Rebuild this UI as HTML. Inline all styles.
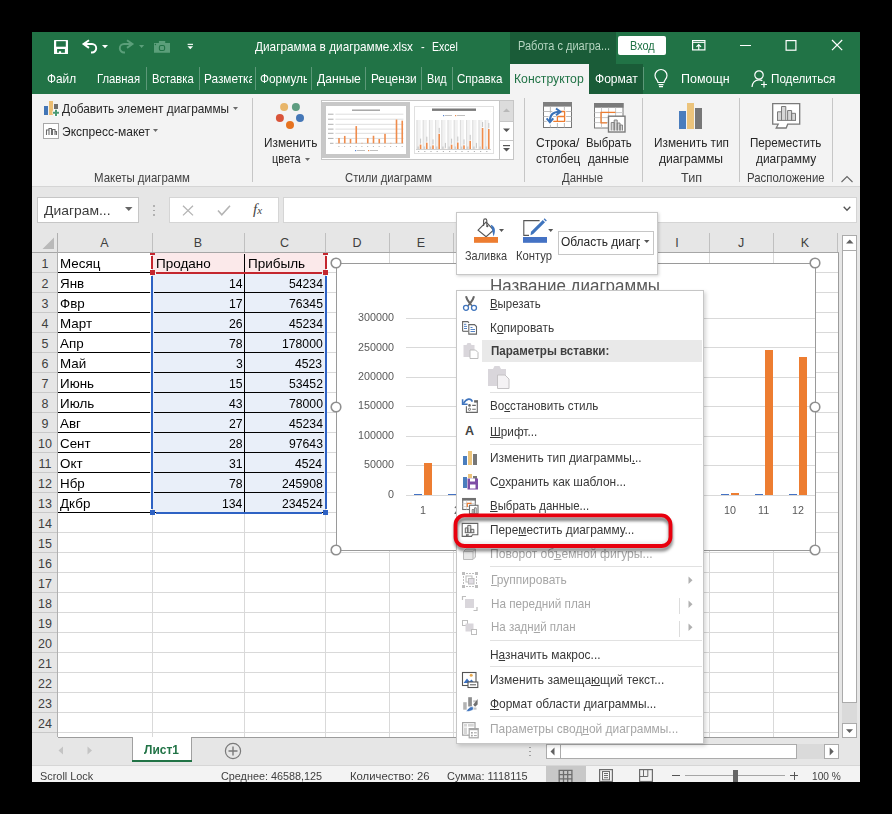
<!DOCTYPE html>
<html><head><meta charset="utf-8"><style>
html,body{margin:0;padding:0;background:#000;width:892px;height:814px;overflow:hidden}
body>div,body>span,body>svg{position:absolute}
div{position:absolute}
svg{position:absolute;overflow:visible}
.t{position:absolute;white-space:pre;font-family:"Liberation Sans",sans-serif;transform-origin:0 0}
u{text-decoration-thickness:1px;text-underline-offset:1px}
</style></head><body>
<div style="left:32px;top:32px;width:828px;height:62px;background:#217346;"></div>
<div style="left:510px;top:32px;width:106px;height:32px;background:#1a5c38;"></div>
<div style="left:510px;top:64px;width:133px;height:30px;background:#1a5c38;"></div>
<div style="left:510px;top:64px;width:79px;height:30px;background:#f3f3f3;"></div>
<div style="left:32px;top:94px;width:828px;height:92px;background:#f3f3f3;"></div>
<div style="left:32px;top:186px;width:828px;height:1px;background:#d5d5d5;"></div>
<div style="left:32px;top:187px;width:828px;height:578px;background:#e6e6e6;"></div>
<div style="left:32px;top:765px;width:828px;height:17px;background:#f3f3f3;"></div>
<span class="t" style="left:255.00px;top:40.00px;font-size:13px;line-height:13px;color:#ffffff;transform:scaleX(0.9073);">Диаграмма в диаграмме.xlsx</span>
<span class="t" style="left:420.60px;top:40.00px;font-size:13px;line-height:13px;color:#ffffff;transform:scaleX(0.8496);">-</span>
<span class="t" style="left:431.80px;top:40.00px;font-size:13px;line-height:13px;color:#ffffff;transform:scaleX(0.8117);">Excel</span>
<span class="t" style="left:517.60px;top:40.22px;font-size:12.5px;line-height:12.5px;color:#b5d5c0;transform:scaleX(0.8808);">Работа с диагра...</span>
<div style="left:618px;top:36px;width:48px;height:19px;background:#fff;border-radius:2px"></div>
<span class="t" style="left:630.00px;top:38.70px;font-size:13px;line-height:13px;color:#217346;transform:scaleX(0.8373);">Вход</span>
<span class="t" style="left:46.70px;top:71.90px;font-size:13px;line-height:13px;color:#ffffff;transform:scaleX(0.9099);">Файл</span>
<span class="t" style="left:97.30px;top:71.90px;font-size:13px;line-height:13px;color:#ffffff;transform:scaleX(0.8693);">Главная</span>
<span class="t" style="left:152.20px;top:71.90px;font-size:13px;line-height:13px;color:#ffffff;transform:scaleX(0.8623);">Вставка</span>
<div style="left:204px;top:64px;width:48px;height:29px;overflow:hidden"><div style="position:absolute;left:-204px;top:-64px"><span class="t" style="left:204.00px;top:71.90px;font-size:13px;line-height:13px;color:#ffffff;transform:scaleX(0.9099);">Разметка страницы</span></div></div>
<div style="left:260px;top:64px;width:47px;height:29px;overflow:hidden"><div style="position:absolute;left:-260px;top:-64px"><span class="t" style="left:260.00px;top:71.90px;font-size:13px;line-height:13px;color:#ffffff;transform:scaleX(0.9099);">Формулы</span></div></div>
<span class="t" style="left:316.60px;top:71.90px;font-size:13px;line-height:13px;color:#ffffff;transform:scaleX(0.9341);">Данные</span>
<div style="left:370px;top:64px;width:47px;height:29px;overflow:hidden"><div style="position:absolute;left:-370px;top:-64px"><span class="t" style="left:370.50px;top:71.90px;font-size:13px;line-height:13px;color:#ffffff;transform:scaleX(0.9099);">Рецензирование</span></div></div>
<span class="t" style="left:427.00px;top:71.90px;font-size:13px;line-height:13px;color:#ffffff;transform:scaleX(0.8372);">Вид</span>
<span class="t" style="left:457.30px;top:71.90px;font-size:13px;line-height:13px;color:#ffffff;transform:scaleX(0.8898);">Справка</span>
<span class="t" style="left:514.30px;top:71.60px;font-size:13px;line-height:13px;color:#217346;transform:scaleX(0.9406);">Конструктор</span>
<span class="t" style="left:595.00px;top:71.60px;font-size:13px;line-height:13px;color:#ffffff;transform:scaleX(0.9274);">Формат</span>
<span class="t" style="left:681.40px;top:71.90px;font-size:13px;line-height:13px;color:#ffffff;transform:scaleX(0.9598);">Помощн</span>
<span class="t" style="left:771.00px;top:71.90px;font-size:13px;line-height:13px;color:#ffffff;transform:scaleX(0.8974);">Поделиться</span>
<div style="left:146px;top:67px;width:1px;height:23px;background:#5c9878;"></div>
<div style="left:199px;top:67px;width:1px;height:23px;background:#5c9878;"></div>
<div style="left:255px;top:67px;width:1px;height:23px;background:#5c9878;"></div>
<div style="left:311px;top:67px;width:1px;height:23px;background:#5c9878;"></div>
<div style="left:365px;top:67px;width:1px;height:23px;background:#5c9878;"></div>
<div style="left:421px;top:67px;width:1px;height:23px;background:#5c9878;"></div>
<div style="left:452px;top:67px;width:1px;height:23px;background:#5c9878;"></div>
<div style="left:643px;top:67px;width:1px;height:23px;background:#5c9878;"></div>
<svg style="left:54px;top:40px;" width="14" height="14" viewBox="0 0 14 14"><rect x="0" y="0" width="14" height="14" rx="0.6" fill="#fff"/><rect x="2.2" y="1.2" width="9.6" height="5.5" fill="#217346"/><path d="M3.1 9H10.9V12.8H7.1V11.3H4.9V12.8H3.1Z" fill="#217346"/></svg>
<svg style="left:80px;top:38px;" width="20" height="17" viewBox="0 0 20 17"><path d="M9 2.2L3.6 6.05L9 9.9" fill="none" stroke="#fff" stroke-width="2"/><path d="M3.8 6.05H12A4.2 4.2 0 0 1 12 14.45H11" fill="none" stroke="#fff" stroke-width="1.9"/></svg>
<svg style="left:102px;top:45px;" width="6" height="4" viewBox="0 0 6 4"><path d="M0 0h6l-3 3.2z" fill="#fff"/></svg>
<svg style="left:116px;top:38px;" width="20" height="17" viewBox="0 0 20 17"><path d="M11 2.2L16.4 6.05L11 9.9" fill="none" stroke="#5b9f7a" stroke-width="2"/><path d="M16.2 6.05H8A4.2 4.2 0 0 0 8 14.45H9" fill="none" stroke="#5b9f7a" stroke-width="1.9"/></svg>
<svg style="left:139px;top:45px;" width="6" height="4" viewBox="0 0 6 4"><path d="M0 0h5.2l-2.6 3z" fill="#5b9f7a"/></svg>
<svg style="left:153px;top:40px;" width="18" height="14" viewBox="0 0 18 14"><path d="M1 3H5.9V1H12.2V3H17V12.8H1Z" fill="#5b9f7a"/><rect x="6.4" y="5.5" width="5.2" height="5" rx="1.6" fill="none" stroke="#217346" stroke-width="1.1"/><circle cx="2.4" cy="4.5" r="0.7" fill="#217346"/></svg>
<svg style="left:187px;top:43px;" width="7" height="8" viewBox="0 0 7 8"><rect x="0.6" y="0.8" width="5.4" height="1.1" fill="#fff"/><path d="M0.5 3.2h5.6l-2.8 3z" fill="#fff"/></svg>
<svg style="left:692px;top:40px;" width="14" height="11" viewBox="0 0 14 11"><rect x="0.6" y="0.6" width="12.3" height="9.3" fill="none" stroke="#fff" stroke-width="1.2"/><path d="M0.6 2.4h12.3" stroke="#fff" stroke-width="1"/><path d="M6.75 10v-5.5M4.5 6.8l2.25-2.3 2.25 2.3" fill="none" stroke="#fff" stroke-width="1.2"/></svg>
<div style="left:740px;top:45px;width:11px;height:1px;background:#fff;"></div>
<svg style="left:785px;top:40px;" width="12" height="11" viewBox="0 0 12 11"><rect x="1.1" y="0.6" width="9.8" height="9.6" fill="none" stroke="#fff" stroke-width="1.2"/></svg>
<svg style="left:831px;top:39px;" width="12" height="12" viewBox="0 0 12 12"><path d="M1 1l10.2 10.2M11.2 1l-10.2 10.2" stroke="#fff" stroke-width="1.2"/></svg>
<svg style="left:654px;top:70px;" width="14" height="18" viewBox="0 0 14 18"><path d="M4 12.5c0-2.5-3-3.6-3-7a6 6 0 0 1 12 0c0 3.4-3 4.5-3 7z" fill="none" stroke="#fff" stroke-width="1.2"/><path d="M4.5 14.6h5M5 16.6h4" stroke="#fff" stroke-width="1.2"/></svg>
<svg style="left:751px;top:70px;" width="18" height="18" viewBox="0 0 18 18"><circle cx="8" cy="5" r="4.2" fill="none" stroke="#fff" stroke-width="1.2"/><path d="M1 17c0-4 3-7.2 7-7.2c1.3 0 2.3 0.3 3.3 0.8" fill="none" stroke="#fff" stroke-width="1.2"/><path d="M13 11.5v6M10 14.5h6" stroke="#fff" stroke-width="1.2"/></svg>
<span class="t" style="left:61.90px;top:101.80px;font-size:13px;line-height:13px;color:#262626;transform:scaleX(0.9100);">Добавить элемент диаграммы</span>
<svg style="left:233px;top:107px;" width="5" height="4" viewBox="0 0 5 4"><path d="M0 0h5l-2.5 3z" fill="#6a6a6a"/></svg>
<span class="t" style="left:61.90px;top:124.70px;font-size:13px;line-height:13px;color:#262626;transform:scaleX(0.9245);">Экспресс-макет</span>
<svg style="left:153px;top:129px;" width="5" height="4" viewBox="0 0 5 4"><path d="M0 0h5l-2.5 3z" fill="#6a6a6a"/></svg>
<span class="t" style="left:93.50px;top:171.00px;font-size:13px;line-height:13px;color:#3f3f3f;transform:scaleX(0.8808);">Макеты диаграмм</span>
<div style="left:44px;top:106px;width:4px;height:9px;background:#4275b6;"></div>
<div style="left:49px;top:101px;width:4px;height:14px;background:#ebbd72;"></div>
<div style="left:54px;top:104px;width:4px;height:4.5px;background:#6f6f6f;"></div>
<svg style="left:52px;top:109px;" width="8" height="8" viewBox="0 0 8 8"><path d="M0.5 3.5h7M4 0v7.5" stroke="#fff" stroke-width="3.4"/><path d="M1 3.7h6M4 0.8v6.2" stroke="#4b9a74" stroke-width="2"/></svg>
<svg style="left:43px;top:123px;" width="16" height="16" viewBox="0 0 16 16"><rect x="0.5" y="0.5" width="15" height="15" fill="#fff" stroke="#a8a8a8"/><path d="M3.5 12v-5h2.5v5M6 12v-6.5h2.5v6.5M9.5 12v-5.5h2.5v5.5M12 12v-3.5h1.5v3.5" fill="none" stroke="#6a6a6a" stroke-width="1.1"/></svg>
<div style="left:252px;top:98px;width:1px;height:84px;background:#c6c6c6;"></div>
<div style="left:524px;top:98px;width:1px;height:84px;background:#c6c6c6;"></div>
<div style="left:642px;top:98px;width:1px;height:84px;background:#c6c6c6;"></div>
<div style="left:739px;top:98px;width:1px;height:84px;background:#c6c6c6;"></div>
<div style="left:832px;top:98px;width:1px;height:84px;background:#c6c6c6;"></div>
<svg style="left:274px;top:100px;" width="32" height="32" viewBox="0 0 32 32"><circle cx="10.1" cy="6.9" r="4" fill="#e8b66a"/><circle cx="21.9" cy="6.9" r="4" fill="#5d9c80"/><circle cx="5.9" cy="18" r="4" fill="#d9543a"/><circle cx="26" cy="18" r="4" fill="#4577b7"/><circle cx="16" cy="25" r="4" fill="#e67320"/></svg>
<span class="t" style="left:263.50px;top:136.00px;font-size:13px;line-height:13px;color:#262626;transform:scaleX(0.9091);">Изменить</span>
<span class="t" style="left:271.70px;top:151.60px;font-size:13px;line-height:13px;color:#262626;transform:scaleX(0.8410);">цвета</span>
<svg style="left:304.5px;top:157.5px;" width="5" height="4" viewBox="0 0 5 4"><path d="M0 0h5l-2.5 3z" fill="#6a6a6a"/></svg>
<div style="left:321px;top:100px;width:193px;height:60px;background:#fff;box-sizing:border-box;border:1px solid #c6c6c6"></div>
<div style="left:322px;top:102px;width:88px;height:56px;background:#c8c8c8;"></div>
<div style="left:326px;top:106px;width:80px;height:48px;background:#fff;"></div>
<div style="left:414px;top:106px;width:80px;height:48px;background:#fff;box-sizing:border-box;border:1px solid #e0e0e0"></div>
<div style="left:499px;top:100px;width:15px;height:60px;background:#fff;box-sizing:border-box;border:1px solid #c6c6c6"></div>
<div style="left:500px;top:101px;width:13px;height:20px;background:#dcdcdc;"></div>
<div style="left:499px;top:121px;width:15px;height:1px;background:#c6c6c6;"></div>
<div style="left:499px;top:140px;width:15px;height:1px;background:#c6c6c6;"></div>
<svg style="left:503px;top:108px;" width="8" height="5" viewBox="0 0 8 5"><path d="M0 4h7l-3.5-3.5z" fill="#b8b8b8"/></svg>
<svg style="left:503px;top:128px;" width="8" height="5" viewBox="0 0 8 5"><path d="M0 0.5h7l-3.5 3.5z" fill="#555"/></svg>
<svg style="left:503px;top:145px;" width="8" height="10" viewBox="0 0 8 10"><rect x="0" y="0" width="7" height="1.2" fill="#555"/><path d="M0 3h7l-3.5 3.5z" fill="#555"/></svg>
<span class="t" style="left:344.50px;top:170.70px;font-size:13px;line-height:13px;color:#3f3f3f;transform:scaleX(0.8690);">Стили диаграмм</span>
<span class="t" style="left:536.10px;top:136.30px;font-size:13px;line-height:13px;color:#262626;transform:scaleX(0.9299);">Строка/</span>
<span class="t" style="left:535.70px;top:152.00px;font-size:13px;line-height:13px;color:#262626;transform:scaleX(0.9075);">столбец</span>
<span class="t" style="left:585.60px;top:136.30px;font-size:13px;line-height:13px;color:#262626;transform:scaleX(0.8742);">Выбрать</span>
<span class="t" style="left:588.00px;top:152.00px;font-size:13px;line-height:13px;color:#262626;transform:scaleX(0.8960);">данные</span>
<span class="t" style="left:562.00px;top:171.20px;font-size:13px;line-height:13px;color:#3f3f3f;transform:scaleX(0.8724);">Данные</span>
<span class="t" style="left:653.50px;top:136.00px;font-size:13px;line-height:13px;color:#262626;transform:scaleX(0.9093);">Изменить тип</span>
<span class="t" style="left:658.50px;top:152.00px;font-size:13px;line-height:13px;color:#262626;transform:scaleX(0.9342);">диаграммы</span>
<span class="t" style="left:681.00px;top:171.00px;font-size:13px;line-height:13px;color:#3f3f3f;transform:scaleX(0.9702);">Тип</span>
<span class="t" style="left:750.30px;top:136.10px;font-size:13px;line-height:13px;color:#262626;transform:scaleX(0.8954);">Переместить</span>
<span class="t" style="left:756.00px;top:152.00px;font-size:13px;line-height:13px;color:#262626;transform:scaleX(0.9167);">диаграмму</span>
<span class="t" style="left:746.50px;top:170.60px;font-size:13px;line-height:13px;color:#3f3f3f;transform:scaleX(0.8790);">Расположение</span>
<svg style="left:841px;top:176px;" width="12" height="7" viewBox="0 0 12 7"><path d="M0.5 6l5.5-5.5 5.5 5.5" fill="none" stroke="#666" stroke-width="1.1"/></svg>
<svg style="left:543px;top:102px;" width="30" height="27" viewBox="0 0 30 27"><rect x="0.5" y="0.5" width="28" height="25" fill="#fff" stroke="#777" stroke-width="1"/>
<rect x="0" y="0" width="29" height="4.6" fill="#7f7f7f"/>
<path d="M7.4 4.6V25.5M14.4 4.6V25.5M21.4 4.6V25.5M0.5 9.5H28.5M0.5 14.5H28.5M0.5 19.4H28.5" stroke="#b4b4b4" stroke-width="0.9"/>
<path d="M18 9.5H21.6V19.4H10.3M14.4 14.5H21.6M14.4 14.5V19.4" fill="none" stroke="#fff" stroke-width="3"/>
<path d="M6.9 19C6.9 13 10 9.8 16.5 9.8M13 6.5L17.5 9.8L13 13.2M3.6 16.3L6.9 20.3L10.3 16.3" fill="none" stroke="#fff" stroke-width="4"/>
<path d="M18 9.5H21.6V19.4H10.3M14.4 14.5H21.6M14.4 14.5V19.4" fill="none" stroke="#ed7d31" stroke-width="1.3"/>
<path d="M6.9 19C6.9 13 10 9.8 16.5 9.8" fill="none" stroke="#3a72b8" stroke-width="2.1"/>
<path d="M13 6.5L17.5 9.8L13 13.2M3.6 16.3L6.9 20.3L10.3 16.3" fill="none" stroke="#3a72b8" stroke-width="2"/></svg>
<svg style="left:594px;top:103px;" width="32" height="30" viewBox="0 0 32 30"><rect x="0.5" y="0.5" width="28.5" height="24.5" fill="#fff" stroke="#7a7a7a"/>
<rect x="0" y="0" width="29.5" height="4.7" fill="#7a7a7a"/>
<path d="M7.5 4.7v20M14.6 4.7v20M21.6 4.7v20M0.5 9.6h28.5M0.5 14.6h28.5M0.5 19.6h28.5" stroke="#c8c8c8" stroke-width="1"/>
<path d="M21.5 9.4h-14.5v10.4h6" fill="none" stroke="#ed7d31" stroke-width="1.3"/>
<rect x="14.5" y="13.2" width="16.5" height="15.8" fill="#fff" stroke="#7a7a7a" stroke-width="1.4"/>
<path d="M17.2 27.5v-8h3v8M20.2 27.5v-10.5h3v10.5M23.2 27.5v-7.5h2.8v7.5M26 27.5v-5.5h2.5v5.5" fill="#d6d6d6" stroke="#7a7a7a" stroke-width="0.9"/></svg>
<div style="left:679px;top:111px;width:7px;height:18px;background:#4a7dbd;"></div>
<div style="left:687px;top:103px;width:7px;height:26px;background:#ecc47c;"></div>
<div style="left:695px;top:108px;width:7px;height:21px;background:#777;"></div>
<svg style="left:772px;top:103px;" width="29" height="26" viewBox="0 0 29 26"><path d="M0.7 0.7h27v20.5h-12l-1.5 3.8h-10l2-3.8h-5.5z" fill="#fff" stroke="#7a7a7a" stroke-width="1.3"/>
<path d="M5.5 17.3v-8.5h4v8.5M9.5 17.3v-13.8h4.3v13.8M15.6 17.3v-9.8h4v9.8M19.6 17.3v-7h3.9v7" fill="#d6d6d6" stroke="#7a7a7a" stroke-width="1"/>
<path d="M5 17.4h19" stroke="#7a7a7a" stroke-width="1"/></svg>
<div style="left:37px;top:197px;width:102px;height:26px;background:#fff;box-sizing:border-box;border:1px solid #c6c6c6"></div>
<span class="t" style="left:43.60px;top:203.80px;font-size:13px;line-height:13px;color:#3a3a3a;transform:scaleX(1.0695);">Диаграм...</span>
<svg style="left:125px;top:207px;" width="8" height="5" viewBox="0 0 8 5"><path d="M0 0h7.5l-3.75 4z" fill="#666"/></svg>
<div style="left:153px;top:205.0px;width:2px;height:1.5px;background:#a0a0a0;border-radius:1px"></div>
<div style="left:153px;top:209.5px;width:2px;height:1.5px;background:#a0a0a0;border-radius:1px"></div>
<div style="left:153px;top:214.0px;width:2px;height:1.5px;background:#a0a0a0;border-radius:1px"></div>
<div style="left:169px;top:197px;width:110px;height:26px;background:#fff;box-sizing:border-box;border:1px solid #d5d5d5"></div>
<svg style="left:182px;top:205px;" width="12" height="11" viewBox="0 0 12 11"><path d="M1 0.8l10 9.6M11 0.8l-10 9.6" stroke="#b4b4b4" stroke-width="1.3"/></svg>
<svg style="left:217px;top:205px;" width="14" height="11" viewBox="0 0 14 11"><path d="M1 5.5l3.8 4.2l8.2-9" fill="none" stroke="#b4b4b4" stroke-width="1.6"/></svg>
<span class="t" style="left:253px;top:202px;font-family:'Liberation Serif';font-style:italic;font-size:15px;line-height:15px;color:#444">f<span style="font-size:11px">x</span></span>
<div style="left:283px;top:197px;width:574px;height:26px;background:#fff;box-sizing:border-box;border:1px solid #d5d5d5"></div>
<svg style="left:843px;top:206px;" width="8" height="6" viewBox="0 0 8 6"><path d="M0.7 0.7l3.3 3.6l3.3-3.6" fill="none" stroke="#555" stroke-width="1.3"/></svg>
<div style="left:58px;top:253px;width:780px;height:484px;background:#fff;"></div>
<div style="left:58px;top:272px;width:780px;height:1px;background:#d9d9d9;"></div>
<div style="left:58px;top:292px;width:780px;height:1px;background:#d9d9d9;"></div>
<div style="left:58px;top:312px;width:780px;height:1px;background:#d9d9d9;"></div>
<div style="left:58px;top:332px;width:780px;height:1px;background:#d9d9d9;"></div>
<div style="left:58px;top:352px;width:780px;height:1px;background:#d9d9d9;"></div>
<div style="left:58px;top:372px;width:780px;height:1px;background:#d9d9d9;"></div>
<div style="left:58px;top:392px;width:780px;height:1px;background:#d9d9d9;"></div>
<div style="left:58px;top:412px;width:780px;height:1px;background:#d9d9d9;"></div>
<div style="left:58px;top:432px;width:780px;height:1px;background:#d9d9d9;"></div>
<div style="left:58px;top:452px;width:780px;height:1px;background:#d9d9d9;"></div>
<div style="left:58px;top:472px;width:780px;height:1px;background:#d9d9d9;"></div>
<div style="left:58px;top:492px;width:780px;height:1px;background:#d9d9d9;"></div>
<div style="left:58px;top:512px;width:780px;height:1px;background:#d9d9d9;"></div>
<div style="left:58px;top:532px;width:780px;height:1px;background:#d9d9d9;"></div>
<div style="left:58px;top:552px;width:780px;height:1px;background:#d9d9d9;"></div>
<div style="left:58px;top:572px;width:780px;height:1px;background:#d9d9d9;"></div>
<div style="left:58px;top:592px;width:780px;height:1px;background:#d9d9d9;"></div>
<div style="left:58px;top:612px;width:780px;height:1px;background:#d9d9d9;"></div>
<div style="left:58px;top:632px;width:780px;height:1px;background:#d9d9d9;"></div>
<div style="left:58px;top:652px;width:780px;height:1px;background:#d9d9d9;"></div>
<div style="left:58px;top:672px;width:780px;height:1px;background:#d9d9d9;"></div>
<div style="left:58px;top:692px;width:780px;height:1px;background:#d9d9d9;"></div>
<div style="left:58px;top:712px;width:780px;height:1px;background:#d9d9d9;"></div>
<div style="left:58px;top:732px;width:780px;height:1px;background:#d9d9d9;"></div>
<div style="left:152px;top:253px;width:1px;height:484px;background:#d9d9d9;"></div>
<div style="left:244px;top:253px;width:1px;height:484px;background:#d9d9d9;"></div>
<div style="left:325px;top:253px;width:1px;height:484px;background:#d9d9d9;"></div>
<div style="left:389px;top:253px;width:1px;height:484px;background:#d9d9d9;"></div>
<div style="left:453px;top:253px;width:1px;height:484px;background:#d9d9d9;"></div>
<div style="left:517px;top:253px;width:1px;height:484px;background:#d9d9d9;"></div>
<div style="left:581px;top:253px;width:1px;height:484px;background:#d9d9d9;"></div>
<div style="left:645px;top:253px;width:1px;height:484px;background:#d9d9d9;"></div>
<div style="left:709px;top:253px;width:1px;height:484px;background:#d9d9d9;"></div>
<div style="left:773px;top:253px;width:1px;height:484px;background:#d9d9d9;"></div>
<div style="left:837px;top:233px;width:1px;height:20px;background:#c0c0c0;"></div>
<div style="left:838px;top:252px;width:1px;height:486px;background:#9c9c9c;"></div>
<div style="left:58px;top:737px;width:781px;height:1px;background:#9c9c9c;"></div>
<div style="left:32px;top:252px;width:807px;height:1px;background:#a6a6a6;"></div>
<div style="left:57px;top:233px;width:1px;height:19px;background:#c0c0c0;"></div>
<div style="left:152px;top:233px;width:1px;height:19px;background:#c0c0c0;"></div>
<div style="left:244px;top:233px;width:1px;height:19px;background:#c0c0c0;"></div>
<div style="left:325px;top:233px;width:1px;height:19px;background:#c0c0c0;"></div>
<div style="left:389px;top:233px;width:1px;height:19px;background:#c0c0c0;"></div>
<div style="left:453px;top:233px;width:1px;height:19px;background:#c0c0c0;"></div>
<div style="left:517px;top:233px;width:1px;height:19px;background:#c0c0c0;"></div>
<div style="left:581px;top:233px;width:1px;height:19px;background:#c0c0c0;"></div>
<div style="left:645px;top:233px;width:1px;height:19px;background:#c0c0c0;"></div>
<div style="left:709px;top:233px;width:1px;height:19px;background:#c0c0c0;"></div>
<div style="left:773px;top:233px;width:1px;height:19px;background:#c0c0c0;"></div>
<div style="left:57px;top:233px;width:1px;height:504px;background:#b0b0b0;"></div>
<svg style="left:42px;top:237px;" width="13" height="13" viewBox="0 0 13 13"><path d="M12 0.5v11.5h-11.5z" fill="#b9b9b9"/></svg>
<span class="t" style="left:100.31px;top:236.62px;font-size:12.5px;line-height:12.5px;color:#3f3f3f;">A</span>
<span class="t" style="left:193.84px;top:236.62px;font-size:12.5px;line-height:12.5px;color:#3f3f3f;">B</span>
<span class="t" style="left:280.00px;top:236.62px;font-size:12.5px;line-height:12.5px;color:#3f3f3f;">C</span>
<span class="t" style="left:352.50px;top:236.62px;font-size:12.5px;line-height:12.5px;color:#3f3f3f;">D</span>
<span class="t" style="left:416.84px;top:236.62px;font-size:12.5px;line-height:12.5px;color:#3f3f3f;">E</span>
<span class="t" style="left:481.19px;top:236.62px;font-size:12.5px;line-height:12.5px;color:#3f3f3f;">F</span>
<span class="t" style="left:544.12px;top:236.62px;font-size:12.5px;line-height:12.5px;color:#3f3f3f;">G</span>
<span class="t" style="left:608.50px;top:236.62px;font-size:12.5px;line-height:12.5px;color:#3f3f3f;">H</span>
<span class="t" style="left:675.25px;top:236.62px;font-size:12.5px;line-height:12.5px;color:#3f3f3f;">I</span>
<span class="t" style="left:737.88px;top:236.62px;font-size:12.5px;line-height:12.5px;color:#3f3f3f;">J</span>
<span class="t" style="left:800.84px;top:236.62px;font-size:12.5px;line-height:12.5px;color:#3f3f3f;">K</span>
<div style="left:32px;top:272px;width:25px;height:1px;background:#c8c8c8;"></div>
<span class="t" style="left:41.53px;top:257.82px;font-size:12.5px;line-height:12.5px;color:#3f3f3f;">1</span>
<div style="left:32px;top:292px;width:25px;height:1px;background:#c8c8c8;"></div>
<span class="t" style="left:41.53px;top:277.82px;font-size:12.5px;line-height:12.5px;color:#3f3f3f;">2</span>
<div style="left:32px;top:312px;width:25px;height:1px;background:#c8c8c8;"></div>
<span class="t" style="left:41.53px;top:297.82px;font-size:12.5px;line-height:12.5px;color:#3f3f3f;">3</span>
<div style="left:32px;top:332px;width:25px;height:1px;background:#c8c8c8;"></div>
<span class="t" style="left:41.53px;top:317.82px;font-size:12.5px;line-height:12.5px;color:#3f3f3f;">4</span>
<div style="left:32px;top:352px;width:25px;height:1px;background:#c8c8c8;"></div>
<span class="t" style="left:41.53px;top:337.82px;font-size:12.5px;line-height:12.5px;color:#3f3f3f;">5</span>
<div style="left:32px;top:372px;width:25px;height:1px;background:#c8c8c8;"></div>
<span class="t" style="left:41.53px;top:357.82px;font-size:12.5px;line-height:12.5px;color:#3f3f3f;">6</span>
<div style="left:32px;top:392px;width:25px;height:1px;background:#c8c8c8;"></div>
<span class="t" style="left:41.53px;top:377.82px;font-size:12.5px;line-height:12.5px;color:#3f3f3f;">7</span>
<div style="left:32px;top:412px;width:25px;height:1px;background:#c8c8c8;"></div>
<span class="t" style="left:41.53px;top:397.82px;font-size:12.5px;line-height:12.5px;color:#3f3f3f;">8</span>
<div style="left:32px;top:432px;width:25px;height:1px;background:#c8c8c8;"></div>
<span class="t" style="left:41.53px;top:417.82px;font-size:12.5px;line-height:12.5px;color:#3f3f3f;">9</span>
<div style="left:32px;top:452px;width:25px;height:1px;background:#c8c8c8;"></div>
<span class="t" style="left:38.06px;top:437.82px;font-size:12.5px;line-height:12.5px;color:#3f3f3f;">10</span>
<div style="left:32px;top:472px;width:25px;height:1px;background:#c8c8c8;"></div>
<span class="t" style="left:38.50px;top:457.82px;font-size:12.5px;line-height:12.5px;color:#3f3f3f;">11</span>
<div style="left:32px;top:492px;width:25px;height:1px;background:#c8c8c8;"></div>
<span class="t" style="left:38.06px;top:477.82px;font-size:12.5px;line-height:12.5px;color:#3f3f3f;">12</span>
<div style="left:32px;top:512px;width:25px;height:1px;background:#c8c8c8;"></div>
<span class="t" style="left:38.06px;top:497.82px;font-size:12.5px;line-height:12.5px;color:#3f3f3f;">13</span>
<div style="left:32px;top:532px;width:25px;height:1px;background:#c8c8c8;"></div>
<span class="t" style="left:38.06px;top:517.82px;font-size:12.5px;line-height:12.5px;color:#3f3f3f;">14</span>
<div style="left:32px;top:552px;width:25px;height:1px;background:#c8c8c8;"></div>
<span class="t" style="left:38.06px;top:537.82px;font-size:12.5px;line-height:12.5px;color:#3f3f3f;">15</span>
<div style="left:32px;top:572px;width:25px;height:1px;background:#c8c8c8;"></div>
<span class="t" style="left:38.06px;top:557.82px;font-size:12.5px;line-height:12.5px;color:#3f3f3f;">16</span>
<div style="left:32px;top:592px;width:25px;height:1px;background:#c8c8c8;"></div>
<span class="t" style="left:38.06px;top:577.82px;font-size:12.5px;line-height:12.5px;color:#3f3f3f;">17</span>
<div style="left:32px;top:612px;width:25px;height:1px;background:#c8c8c8;"></div>
<span class="t" style="left:38.06px;top:597.82px;font-size:12.5px;line-height:12.5px;color:#3f3f3f;">18</span>
<div style="left:32px;top:632px;width:25px;height:1px;background:#c8c8c8;"></div>
<span class="t" style="left:38.06px;top:617.82px;font-size:12.5px;line-height:12.5px;color:#3f3f3f;">19</span>
<div style="left:32px;top:652px;width:25px;height:1px;background:#c8c8c8;"></div>
<span class="t" style="left:38.06px;top:637.82px;font-size:12.5px;line-height:12.5px;color:#3f3f3f;">20</span>
<div style="left:32px;top:672px;width:25px;height:1px;background:#c8c8c8;"></div>
<span class="t" style="left:38.06px;top:657.82px;font-size:12.5px;line-height:12.5px;color:#3f3f3f;">21</span>
<div style="left:32px;top:692px;width:25px;height:1px;background:#c8c8c8;"></div>
<span class="t" style="left:38.06px;top:677.82px;font-size:12.5px;line-height:12.5px;color:#3f3f3f;">22</span>
<div style="left:32px;top:712px;width:25px;height:1px;background:#c8c8c8;"></div>
<span class="t" style="left:38.06px;top:697.82px;font-size:12.5px;line-height:12.5px;color:#3f3f3f;">23</span>
<div style="left:32px;top:732px;width:25px;height:1px;background:#c8c8c8;"></div>
<span class="t" style="left:38.06px;top:717.82px;font-size:12.5px;line-height:12.5px;color:#3f3f3f;">24</span>
<div style="left:153px;top:253px;width:172px;height:19px;background:#fbe9ea;"></div>
<div style="left:153px;top:274px;width:172px;height:238px;background:#e9eff9;"></div>
<div style="left:58px;top:272px;width:92px;height:1px;background:#000;"></div>
<div style="left:58px;top:292px;width:92px;height:1px;background:#000;"></div>
<div style="left:154px;top:292px;width:170px;height:1px;background:#000;"></div>
<div style="left:58px;top:312px;width:92px;height:1px;background:#000;"></div>
<div style="left:154px;top:312px;width:170px;height:1px;background:#000;"></div>
<div style="left:58px;top:332px;width:92px;height:1px;background:#000;"></div>
<div style="left:154px;top:332px;width:170px;height:1px;background:#000;"></div>
<div style="left:58px;top:352px;width:92px;height:1px;background:#000;"></div>
<div style="left:154px;top:352px;width:170px;height:1px;background:#000;"></div>
<div style="left:58px;top:372px;width:92px;height:1px;background:#000;"></div>
<div style="left:154px;top:372px;width:170px;height:1px;background:#000;"></div>
<div style="left:58px;top:392px;width:92px;height:1px;background:#000;"></div>
<div style="left:154px;top:392px;width:170px;height:1px;background:#000;"></div>
<div style="left:58px;top:412px;width:92px;height:1px;background:#000;"></div>
<div style="left:154px;top:412px;width:170px;height:1px;background:#000;"></div>
<div style="left:58px;top:432px;width:92px;height:1px;background:#000;"></div>
<div style="left:154px;top:432px;width:170px;height:1px;background:#000;"></div>
<div style="left:58px;top:452px;width:92px;height:1px;background:#000;"></div>
<div style="left:154px;top:452px;width:170px;height:1px;background:#000;"></div>
<div style="left:58px;top:472px;width:92px;height:1px;background:#000;"></div>
<div style="left:154px;top:472px;width:170px;height:1px;background:#000;"></div>
<div style="left:58px;top:492px;width:92px;height:1px;background:#000;"></div>
<div style="left:154px;top:492px;width:170px;height:1px;background:#000;"></div>
<div style="left:58px;top:512px;width:92px;height:1px;background:#000;"></div>
<div style="left:154px;top:512px;width:170px;height:1px;background:#000;"></div>
<div style="left:244px;top:254px;width:1px;height:258px;background:#000;"></div>
<div style="left:151px;top:256px;width:2px;height:13px;background:#c4262e;"></div>
<div style="left:325px;top:256px;width:2px;height:13px;background:#c4262e;"></div>
<div style="left:156px;top:272px;width:166px;height:2px;background:#c4262e;"></div>
<div style="left:150px;top:253px;width:5px;height:2px;background:#c4262e;"></div>
<div style="left:323px;top:253px;width:5px;height:2px;background:#c4262e;"></div>
<div style="left:150px;top:270px;width:5px;height:5px;background:#c4262e;"></div>
<div style="left:323px;top:270px;width:5px;height:5px;background:#c4262e;"></div>
<div style="left:151px;top:276px;width:2px;height:233px;background:#2e62c4;"></div>
<div style="left:325px;top:276px;width:2px;height:233px;background:#2e62c4;"></div>
<div style="left:156px;top:512px;width:166px;height:2px;background:#2e62c4;"></div>
<div style="left:150px;top:510px;width:5px;height:5px;background:#2e62c4;"></div>
<div style="left:323px;top:510px;width:5px;height:5px;background:#2e62c4;"></div>
<div style="left:58px;top:512px;width:92px;height:1px;background:#000;"></div>
<span class="t" style="left:60.20px;top:257.63px;font-size:12.6px;line-height:12.6px;color:#000;transform:scaleX(1.0635);">Месяц</span>
<span class="t" style="left:155.80px;top:257.63px;font-size:12.6px;line-height:12.6px;color:#000;transform:scaleX(1.0726);">Продано</span>
<span class="t" style="left:247.60px;top:257.63px;font-size:12.6px;line-height:12.6px;color:#000;transform:scaleX(1.0732);">Прибыль</span>
<span class="t" style="left:60.20px;top:277.63px;font-size:12.6px;line-height:12.6px;color:#000;transform:scaleX(1.0635);">Янв</span>
<span class="t" style="left:228.95px;top:277.63px;font-size:12.6px;line-height:12.6px;color:#000;transform:scaleX(0.9686);">14</span>
<span class="t" style="left:288.67px;top:277.63px;font-size:12.6px;line-height:12.6px;color:#000;transform:scaleX(0.9686);">54234</span>
<span class="t" style="left:60.20px;top:297.63px;font-size:12.6px;line-height:12.6px;color:#000;transform:scaleX(1.0635);">Фвр</span>
<span class="t" style="left:228.95px;top:297.63px;font-size:12.6px;line-height:12.6px;color:#000;transform:scaleX(0.9686);">17</span>
<span class="t" style="left:288.67px;top:297.63px;font-size:12.6px;line-height:12.6px;color:#000;transform:scaleX(0.9686);">76345</span>
<span class="t" style="left:60.20px;top:317.63px;font-size:12.6px;line-height:12.6px;color:#000;transform:scaleX(1.0635);">Март</span>
<span class="t" style="left:228.95px;top:317.63px;font-size:12.6px;line-height:12.6px;color:#000;transform:scaleX(0.9686);">26</span>
<span class="t" style="left:288.67px;top:317.63px;font-size:12.6px;line-height:12.6px;color:#000;transform:scaleX(0.9686);">45234</span>
<span class="t" style="left:60.20px;top:337.63px;font-size:12.6px;line-height:12.6px;color:#000;transform:scaleX(1.0635);">Апр</span>
<span class="t" style="left:228.95px;top:337.63px;font-size:12.6px;line-height:12.6px;color:#000;transform:scaleX(0.9686);">78</span>
<span class="t" style="left:281.90px;top:337.63px;font-size:12.6px;line-height:12.6px;color:#000;transform:scaleX(0.9686);">178000</span>
<span class="t" style="left:60.20px;top:357.63px;font-size:12.6px;line-height:12.6px;color:#000;transform:scaleX(1.0635);">Май</span>
<span class="t" style="left:235.73px;top:357.63px;font-size:12.6px;line-height:12.6px;color:#000;transform:scaleX(0.9686);">3</span>
<span class="t" style="left:295.45px;top:357.63px;font-size:12.6px;line-height:12.6px;color:#000;transform:scaleX(0.9686);">4523</span>
<span class="t" style="left:60.20px;top:377.63px;font-size:12.6px;line-height:12.6px;color:#000;transform:scaleX(1.0635);">Июнь</span>
<span class="t" style="left:228.95px;top:377.63px;font-size:12.6px;line-height:12.6px;color:#000;transform:scaleX(0.9686);">15</span>
<span class="t" style="left:288.67px;top:377.63px;font-size:12.6px;line-height:12.6px;color:#000;transform:scaleX(0.9686);">53452</span>
<span class="t" style="left:60.20px;top:397.63px;font-size:12.6px;line-height:12.6px;color:#000;transform:scaleX(1.0635);">Июль</span>
<span class="t" style="left:228.95px;top:397.63px;font-size:12.6px;line-height:12.6px;color:#000;transform:scaleX(0.9686);">43</span>
<span class="t" style="left:288.67px;top:397.63px;font-size:12.6px;line-height:12.6px;color:#000;transform:scaleX(0.9686);">78000</span>
<span class="t" style="left:60.20px;top:417.63px;font-size:12.6px;line-height:12.6px;color:#000;transform:scaleX(1.0635);">Авг</span>
<span class="t" style="left:228.95px;top:417.63px;font-size:12.6px;line-height:12.6px;color:#000;transform:scaleX(0.9686);">27</span>
<span class="t" style="left:288.67px;top:417.63px;font-size:12.6px;line-height:12.6px;color:#000;transform:scaleX(0.9686);">45234</span>
<span class="t" style="left:60.20px;top:437.63px;font-size:12.6px;line-height:12.6px;color:#000;transform:scaleX(1.0635);">Сент</span>
<span class="t" style="left:228.95px;top:437.63px;font-size:12.6px;line-height:12.6px;color:#000;transform:scaleX(0.9686);">28</span>
<span class="t" style="left:288.67px;top:437.63px;font-size:12.6px;line-height:12.6px;color:#000;transform:scaleX(0.9686);">97643</span>
<span class="t" style="left:60.20px;top:457.63px;font-size:12.6px;line-height:12.6px;color:#000;transform:scaleX(1.0635);">Окт</span>
<span class="t" style="left:228.95px;top:457.63px;font-size:12.6px;line-height:12.6px;color:#000;transform:scaleX(0.9686);">31</span>
<span class="t" style="left:295.45px;top:457.63px;font-size:12.6px;line-height:12.6px;color:#000;transform:scaleX(0.9686);">4524</span>
<span class="t" style="left:60.20px;top:477.63px;font-size:12.6px;line-height:12.6px;color:#000;transform:scaleX(1.0635);">Нбр</span>
<span class="t" style="left:228.95px;top:477.63px;font-size:12.6px;line-height:12.6px;color:#000;transform:scaleX(0.9686);">78</span>
<span class="t" style="left:281.90px;top:477.63px;font-size:12.6px;line-height:12.6px;color:#000;transform:scaleX(0.9686);">245908</span>
<span class="t" style="left:60.20px;top:497.63px;font-size:12.6px;line-height:12.6px;color:#000;transform:scaleX(1.0635);">Дкбр</span>
<span class="t" style="left:222.12px;top:497.63px;font-size:12.6px;line-height:12.6px;color:#000;transform:scaleX(0.9686);">134</span>
<span class="t" style="left:281.90px;top:497.63px;font-size:12.6px;line-height:12.6px;color:#000;transform:scaleX(0.9686);">234524</span>
<div style="left:336px;top:263px;width:480px;height:288px;background:#fff;box-sizing:border-box;border:1px solid #9a9a9a"></div>
<div style="left:406px;top:495px;width:409px;height:1px;background:#d9d9d9;"></div>
<span class="t" style="left:388.13px;top:487.90px;font-size:11.7px;line-height:11.7px;color:#595959;transform:scaleX(0.9200);">0</span>
<div style="left:406px;top:465px;width:409px;height:1px;background:#d9d9d9;"></div>
<span class="t" style="left:364.18px;top:458.43px;font-size:11.7px;line-height:11.7px;color:#595959;transform:scaleX(0.9200);">50000</span>
<div style="left:406px;top:436px;width:409px;height:1px;background:#d9d9d9;"></div>
<span class="t" style="left:358.20px;top:428.96px;font-size:11.7px;line-height:11.7px;color:#595959;transform:scaleX(0.9200);">100000</span>
<div style="left:406px;top:406px;width:409px;height:1px;background:#d9d9d9;"></div>
<span class="t" style="left:358.20px;top:399.49px;font-size:11.7px;line-height:11.7px;color:#595959;transform:scaleX(0.9200);">150000</span>
<div style="left:406px;top:377px;width:409px;height:1px;background:#d9d9d9;"></div>
<span class="t" style="left:358.20px;top:370.02px;font-size:11.7px;line-height:11.7px;color:#595959;transform:scaleX(0.9200);">200000</span>
<div style="left:406px;top:347px;width:409px;height:1px;background:#d9d9d9;"></div>
<span class="t" style="left:358.20px;top:340.55px;font-size:11.7px;line-height:11.7px;color:#595959;transform:scaleX(0.9200);">250000</span>
<div style="left:406px;top:318px;width:409px;height:1px;background:#d9d9d9;"></div>
<span class="t" style="left:358.20px;top:311.08px;font-size:11.7px;line-height:11.7px;color:#595959;transform:scaleX(0.9200);">300000</span>
<span class="t" style="left:490.20px;top:278.39px;font-size:17.5px;line-height:17.5px;color:#595959;transform:scaleX(0.9700);">Название диаграммы</span>
<div style="left:414px;top:493.6px;width:8px;height:1.5px;background:#4472c4;"></div>
<div style="left:424px;top:463px;width:8px;height:32px;background:#ed7d31;"></div>
<span class="t" style="left:420.01px;top:504.10px;font-size:11.7px;line-height:11.7px;color:#595959;transform:scaleX(0.9200);">1</span>
<div style="left:448px;top:493.6px;width:8px;height:1.5px;background:#4472c4;"></div>
<span class="t" style="left:454.11px;top:504.10px;font-size:11.7px;line-height:11.7px;color:#595959;transform:scaleX(0.9200);">2</span>
<div style="left:482px;top:493.6px;width:8px;height:1.5px;background:#4472c4;"></div>
<span class="t" style="left:488.21px;top:504.10px;font-size:11.7px;line-height:11.7px;color:#595959;transform:scaleX(0.9200);">3</span>
<div style="left:516px;top:493.6px;width:8px;height:1.5px;background:#4472c4;"></div>
<span class="t" style="left:522.31px;top:504.10px;font-size:11.7px;line-height:11.7px;color:#595959;transform:scaleX(0.9200);">4</span>
<div style="left:550px;top:493.6px;width:8px;height:1.5px;background:#4472c4;"></div>
<span class="t" style="left:556.41px;top:504.10px;font-size:11.7px;line-height:11.7px;color:#595959;transform:scaleX(0.9200);">5</span>
<div style="left:584px;top:493.6px;width:8px;height:1.5px;background:#4472c4;"></div>
<span class="t" style="left:590.51px;top:504.10px;font-size:11.7px;line-height:11.7px;color:#595959;transform:scaleX(0.9200);">6</span>
<div style="left:619px;top:493.6px;width:8px;height:1.5px;background:#4472c4;"></div>
<span class="t" style="left:624.61px;top:504.10px;font-size:11.7px;line-height:11.7px;color:#595959;transform:scaleX(0.9200);">7</span>
<div style="left:653px;top:493.6px;width:8px;height:1.5px;background:#4472c4;"></div>
<span class="t" style="left:658.71px;top:504.10px;font-size:11.7px;line-height:11.7px;color:#595959;transform:scaleX(0.9200);">8</span>
<div style="left:687px;top:493.6px;width:8px;height:1.5px;background:#4472c4;"></div>
<span class="t" style="left:692.81px;top:504.10px;font-size:11.7px;line-height:11.7px;color:#595959;transform:scaleX(0.9200);">9</span>
<div style="left:721px;top:493.6px;width:8px;height:1.5px;background:#4472c4;"></div>
<div style="left:731px;top:493px;width:8px;height:2px;background:#ed7d31;"></div>
<span class="t" style="left:723.93px;top:504.10px;font-size:11.7px;line-height:11.7px;color:#595959;transform:scaleX(0.9200);">10</span>
<div style="left:755px;top:493.6px;width:8px;height:1.5px;background:#4472c4;"></div>
<div style="left:765px;top:350px;width:8px;height:145px;background:#ed7d31;"></div>
<span class="t" style="left:758.40px;top:504.10px;font-size:11.7px;line-height:11.7px;color:#595959;transform:scaleX(0.9200);">11</span>
<div style="left:789px;top:493.6px;width:8px;height:1.5px;background:#4472c4;"></div>
<div style="left:799px;top:357px;width:8px;height:138px;background:#ed7d31;"></div>
<span class="t" style="left:792.13px;top:504.10px;font-size:11.7px;line-height:11.7px;color:#595959;transform:scaleX(0.9200);">12</span>
<svg style="left:329.3px;top:256.3px;" width="14" height="14" viewBox="0 0 14 14"><circle cx="7" cy="7" r="4.8" fill="#fff" stroke="#8f8f8f" stroke-width="1.6"/></svg>
<svg style="left:808.3px;top:256.3px;" width="14" height="14" viewBox="0 0 14 14"><circle cx="7" cy="7" r="4.8" fill="#fff" stroke="#8f8f8f" stroke-width="1.6"/></svg>
<svg style="left:329.3px;top:399.5px;" width="14" height="14" viewBox="0 0 14 14"><circle cx="7" cy="7" r="4.8" fill="#fff" stroke="#8f8f8f" stroke-width="1.6"/></svg>
<svg style="left:808.3px;top:399.5px;" width="14" height="14" viewBox="0 0 14 14"><circle cx="7" cy="7" r="4.8" fill="#fff" stroke="#8f8f8f" stroke-width="1.6"/></svg>
<svg style="left:329.3px;top:543.3px;" width="14" height="14" viewBox="0 0 14 14"><circle cx="7" cy="7" r="4.8" fill="#fff" stroke="#8f8f8f" stroke-width="1.6"/></svg>
<svg style="left:808.3px;top:543.3px;" width="14" height="14" viewBox="0 0 14 14"><circle cx="7" cy="7" r="4.8" fill="#fff" stroke="#8f8f8f" stroke-width="1.6"/></svg>
<svg style="left:568.5px;top:256.3px;" width="14" height="14" viewBox="0 0 14 14"><circle cx="7" cy="7" r="4.8" fill="#fff" stroke="#8f8f8f" stroke-width="1.6"/></svg>
<svg style="left:568.5px;top:543.3px;" width="14" height="14" viewBox="0 0 14 14"><circle cx="7" cy="7" r="4.8" fill="#fff" stroke="#8f8f8f" stroke-width="1.6"/></svg>
<div style="left:842px;top:235px;width:15px;height:502px;background:#dadada;"></div>
<div style="left:842px;top:235px;width:15px;height:16px;background:#fff;box-sizing:border-box;border:1px solid #ababab"></div>
<div style="left:842px;top:250px;width:15px;height:453px;background:#fff;box-sizing:border-box;border:1px solid #ababab"></div>
<div style="left:842px;top:723px;width:15px;height:15px;background:#fff;box-sizing:border-box;border:1px solid #ababab"></div>
<svg style="left:846px;top:239px;" width="8" height="5" viewBox="0 0 8 5"><path d="M0 4.5h7.5l-3.75-4z" fill="#606060"/></svg>
<svg style="left:846px;top:729px;" width="8" height="5" viewBox="0 0 8 5"><path d="M0 0.3h7l-3.5 3.6z" fill="#606060"/></svg>
<div style="left:32px;top:738px;width:828px;height:27px;background:#e6e6e6;"></div>
<div style="left:132px;top:737px;width:60px;height:24px;background:#fff;box-sizing:border-box;border-left:1px solid #a0a0a0;border-right:1px solid #a0a0a0"></div>
<div style="left:132px;top:760px;width:60px;height:2px;background:#217346;"></div>
<span class="t" style="left:144.00px;top:743.17px;font-size:13.5px;line-height:13.5px;color:#217346;font-weight:bold;transform:scaleX(0.8879);">Лист1</span>
<svg style="left:58px;top:746px;" width="6" height="9" viewBox="0 0 6 9"><path d="M5 0.5l-4.5 4l4.5 4z" fill="#c4c4c4"/></svg>
<svg style="left:87px;top:746px;" width="6" height="9" viewBox="0 0 6 9"><path d="M0.5 0.5l4.5 4l-4.5 4z" fill="#c4c4c4"/></svg>
<svg style="left:224px;top:742px;" width="18" height="18" viewBox="0 0 18 18"><circle cx="9" cy="9" r="7.6" fill="none" stroke="#7a7a7a" stroke-width="1.2"/><path d="M9 4.5v9M4.5 9h9" stroke="#7a7a7a" stroke-width="1.4"/></svg>
<div style="left:529px;top:746.5px;width:2px;height:1.5px;background:#a0a0a0;"></div>
<div style="left:529px;top:750.5px;width:2px;height:1.5px;background:#a0a0a0;"></div>
<div style="left:529px;top:754.5px;width:2px;height:1.5px;background:#a0a0a0;"></div>
<div style="left:546px;top:744px;width:293px;height:15px;background:#dadada;"></div>
<div style="left:546px;top:744px;width:15px;height:15px;background:#fff;box-sizing:border-box;border:1px solid #ababab"></div>
<div style="left:560px;top:744px;width:237px;height:15px;background:#fff;box-sizing:border-box;border:1px solid #ababab"></div>
<div style="left:824px;top:744px;width:15px;height:15px;background:#fff;box-sizing:border-box;border:1px solid #ababab"></div>
<svg style="left:550px;top:747px;" width="6" height="9" viewBox="0 0 6 9"><path d="M4.5 0.5l-4 4l4 4z" fill="#606060"/></svg>
<svg style="left:829px;top:747px;" width="6" height="9" viewBox="0 0 6 9"><path d="M0.7 0.5l4 4l-4 4z" fill="#606060"/></svg>
<div style="left:32px;top:765px;width:828px;height:1px;background:#d6d6d6;"></div>
<span class="t" style="left:39.60px;top:770.38px;font-size:11.6px;line-height:11.6px;color:#3f3f3f;transform:scaleX(0.9387);">Scroll Lock</span>
<span class="t" style="left:220.80px;top:770.38px;font-size:11.6px;line-height:11.6px;color:#3f3f3f;transform:scaleX(0.9336);">Среднее: 46588,125</span>
<span class="t" style="left:349.90px;top:770.38px;font-size:11.6px;line-height:11.6px;color:#3f3f3f;transform:scaleX(0.9747);">Количество: 26</span>
<span class="t" style="left:446.80px;top:770.38px;font-size:11.6px;line-height:11.6px;color:#3f3f3f;transform:scaleX(0.9439);">Сумма: 1118115</span>
<span class="t" style="left:811.90px;top:770.38px;font-size:11.6px;line-height:11.6px;color:#3f3f3f;transform:scaleX(0.8758);">100 %</span>
<div style="left:546px;top:766px;width:40px;height:16px;background:#c8c8c8;"></div>
<svg style="left:558px;top:769px;" width="15" height="14" viewBox="0 0 15 14"><path d="M1.2 0.7V14M5.5 0.7V14M9.7 0.7V14M13.9 0.7V14M0.5 1.3H14.6M0.5 5.6H14.6M0.5 9.9H14.6" fill="none" stroke="#6d6d6d" stroke-width="1.3"/></svg>
<svg style="left:599px;top:769px;" width="15" height="14" viewBox="0 0 15 14"><rect x="0.6" y="0.6" width="12.8" height="11.9" fill="none" stroke="#6d6d6d" stroke-width="1.2"/><rect x="3.5" y="2.5" width="7" height="8.3" fill="none" stroke="#6d6d6d" stroke-width="1"/><path d="M5 4.5H9M5 6.5H9M5 8.7H9" stroke="#6d6d6d" stroke-width="1"/></svg>
<svg style="left:639px;top:769px;" width="15" height="14" viewBox="0 0 15 14"><rect x="0.6" y="0.6" width="12.8" height="11.9" fill="none" stroke="#6d6d6d" stroke-width="1.2"/><path d="M0.6 7.5H8.8V0.6M4.5 0.6V7.5" fill="none" stroke="#6d6d6d" stroke-width="1"/></svg>
<div style="left:672px;top:775px;width:8px;height:1px;background:#555;"></div>
<div style="left:685px;top:775px;width:100px;height:1px;background:#a6a6a6;"></div>
<div style="left:733px;top:770px;width:5px;height:12px;background:#666;"></div>
<div style="left:790px;top:775px;width:8px;height:1px;background:#555;"></div>
<div style="left:793.5px;top:771.5px;width:1.0px;height:8.5px;background:#555;"></div>
<svg style="left:0;top:0" width="892" height="814" viewBox="0 0 892 814"><rect x="352" y="109.5" width="28" height="1.4" fill="#a0a0a0"/><rect x="335.4" y="113.7" width="68" height="1" fill="#dedede"/><rect x="328" y="113.7" width="5.5" height="1" fill="#b0b0b0"/><rect x="335.4" y="118.7" width="68" height="1" fill="#dedede"/><rect x="328" y="118.7" width="5.5" height="1" fill="#b0b0b0"/><rect x="335.4" y="123.8" width="68" height="1" fill="#dedede"/><rect x="328" y="123.8" width="5.5" height="1" fill="#b0b0b0"/><rect x="335.4" y="128.6" width="68" height="1" fill="#dedede"/><rect x="328" y="128.6" width="5.5" height="1" fill="#b0b0b0"/><rect x="335.4" y="132.8" width="68" height="1" fill="#dedede"/><rect x="328" y="132.8" width="5.5" height="1" fill="#b0b0b0"/><rect x="335.4" y="137.9" width="68" height="1" fill="#dedede"/><rect x="328" y="137.9" width="5.5" height="1" fill="#b0b0b0"/><rect x="335.4" y="142.8" width="68" height="1" fill="#cfcfcf"/><rect x="330" y="142.8" width="3.5" height="1" fill="#b0b0b0"/><rect x="338.20" y="138.06" width="1.6" height="5.24" fill="#ef8c4c"/><rect x="338.40" y="146" width="1" height="1" fill="#b4b4b4"/><rect x="343.95" y="135.92" width="1.6" height="7.38" fill="#ef8c4c"/><rect x="344.15" y="146" width="1" height="1" fill="#b4b4b4"/><rect x="349.70" y="138.93" width="1.6" height="4.37" fill="#ef8c4c"/><rect x="349.90" y="146" width="1" height="1" fill="#b4b4b4"/><rect x="355.45" y="126.09" width="1.6" height="17.21" fill="#ef8c4c"/><rect x="355.65" y="146" width="1" height="1" fill="#b4b4b4"/><rect x="361.20" y="142.86" width="1.6" height="0.44" fill="#ef8c4c"/><rect x="361.40" y="146" width="1" height="1" fill="#b4b4b4"/><rect x="366.95" y="138.13" width="1.6" height="5.17" fill="#ef8c4c"/><rect x="367.15" y="146" width="1" height="1" fill="#b4b4b4"/><rect x="372.70" y="135.76" width="1.6" height="7.54" fill="#ef8c4c"/><rect x="372.90" y="146" width="1" height="1" fill="#b4b4b4"/><rect x="378.45" y="138.93" width="1.6" height="4.37" fill="#ef8c4c"/><rect x="378.65" y="146" width="1" height="1" fill="#b4b4b4"/><rect x="384.20" y="133.86" width="1.6" height="9.44" fill="#ef8c4c"/><rect x="384.40" y="146" width="1" height="1" fill="#b4b4b4"/><rect x="389.95" y="142.86" width="1.6" height="0.44" fill="#ef8c4c"/><rect x="390.15" y="146" width="1" height="1" fill="#b4b4b4"/><rect x="395.70" y="119.53" width="1.6" height="23.77" fill="#ef8c4c"/><rect x="395.90" y="146" width="1" height="1" fill="#b4b4b4"/><rect x="401.45" y="120.63" width="1.6" height="22.67" fill="#ef8c4c"/><rect x="401.65" y="146" width="1" height="1" fill="#b4b4b4"/><rect x="355" y="150" width="1.2" height="1.2" fill="#5b85d0"/><rect x="357" y="150" width="8" height="1" fill="#c0c0c0"/><rect x="368" y="150" width="1.2" height="1.2" fill="#ef8c4c"/><rect x="370" y="150" width="8" height="1" fill="#c0c0c0"/><rect x="432" y="108.5" width="44" height="2.4" fill="#7a7a7a"/><rect x="443" y="115" width="1.2" height="1.2" fill="#5b85d0"/><rect x="445" y="115" width="7" height="1" fill="#c0c0c0"/><rect x="455" y="115" width="1.2" height="1.2" fill="#ef8c4c"/><rect x="457" y="115" width="8" height="1" fill="#c0c0c0"/><rect x="416.50" y="120" width="4.2" height="29.3" fill="#f2f2f2"/><rect x="416.50" y="120" width="1" height="29.3" fill="#dcdcdc"/><rect x="419.80" y="144.60" width="1.6" height="4.70" fill="#ef8c4c"/><rect x="420.10" y="138.60" width="1" height="5" fill="#c4c4c4"/><rect x="417.30" y="146.5" width="1.6" height="2.5" fill="#d0d0d0"/><rect x="418.00" y="151" width="1.2" height="1" fill="#b4b4b4"/><rect x="422.70" y="120" width="4.2" height="29.3" fill="#f2f2f2"/><rect x="422.70" y="120" width="1" height="29.3" fill="#dcdcdc"/><rect x="426.00" y="142.68" width="1.6" height="6.62" fill="#ef8c4c"/><rect x="426.30" y="136.68" width="1" height="5" fill="#c4c4c4"/><rect x="423.50" y="146.5" width="1.6" height="2.5" fill="#d0d0d0"/><rect x="424.20" y="151" width="1.2" height="1" fill="#b4b4b4"/><rect x="428.90" y="120" width="4.2" height="29.3" fill="#f2f2f2"/><rect x="428.90" y="120" width="1" height="29.3" fill="#dcdcdc"/><rect x="432.20" y="145.38" width="1.6" height="3.92" fill="#ef8c4c"/><rect x="432.50" y="139.38" width="1" height="5" fill="#c4c4c4"/><rect x="429.70" y="146.5" width="1.6" height="2.5" fill="#d0d0d0"/><rect x="430.40" y="151" width="1.2" height="1" fill="#b4b4b4"/><rect x="435.10" y="120" width="4.2" height="29.3" fill="#f2f2f2"/><rect x="435.10" y="120" width="1" height="29.3" fill="#dcdcdc"/><rect x="438.40" y="133.87" width="1.6" height="15.43" fill="#ef8c4c"/><rect x="438.70" y="127.87" width="1" height="5" fill="#c4c4c4"/><rect x="435.90" y="146.5" width="1.6" height="2.5" fill="#d0d0d0"/><rect x="436.60" y="151" width="1.2" height="1" fill="#b4b4b4"/><rect x="441.30" y="120" width="4.2" height="29.3" fill="#f2f2f2"/><rect x="441.30" y="120" width="1" height="29.3" fill="#dcdcdc"/><rect x="444.60" y="148.91" width="1.6" height="0.39" fill="#ef8c4c"/><rect x="444.90" y="142.91" width="1" height="5" fill="#c4c4c4"/><rect x="442.10" y="146.5" width="1.6" height="2.5" fill="#d0d0d0"/><rect x="442.80" y="151" width="1.2" height="1" fill="#b4b4b4"/><rect x="447.50" y="120" width="4.2" height="29.3" fill="#f2f2f2"/><rect x="447.50" y="120" width="1" height="29.3" fill="#dcdcdc"/><rect x="450.80" y="144.67" width="1.6" height="4.63" fill="#ef8c4c"/><rect x="451.10" y="138.67" width="1" height="5" fill="#c4c4c4"/><rect x="448.30" y="146.5" width="1.6" height="2.5" fill="#d0d0d0"/><rect x="449.00" y="151" width="1.2" height="1" fill="#b4b4b4"/><rect x="453.70" y="120" width="4.2" height="29.3" fill="#f2f2f2"/><rect x="453.70" y="120" width="1" height="29.3" fill="#dcdcdc"/><rect x="457.00" y="142.54" width="1.6" height="6.76" fill="#ef8c4c"/><rect x="457.30" y="136.54" width="1" height="5" fill="#c4c4c4"/><rect x="454.50" y="146.5" width="1.6" height="2.5" fill="#d0d0d0"/><rect x="455.20" y="151" width="1.2" height="1" fill="#b4b4b4"/><rect x="459.90" y="120" width="4.2" height="29.3" fill="#f2f2f2"/><rect x="459.90" y="120" width="1" height="29.3" fill="#dcdcdc"/><rect x="463.20" y="145.38" width="1.6" height="3.92" fill="#ef8c4c"/><rect x="463.50" y="139.38" width="1" height="5" fill="#c4c4c4"/><rect x="460.70" y="146.5" width="1.6" height="2.5" fill="#d0d0d0"/><rect x="461.40" y="151" width="1.2" height="1" fill="#b4b4b4"/><rect x="466.10" y="120" width="4.2" height="29.3" fill="#f2f2f2"/><rect x="466.10" y="120" width="1" height="29.3" fill="#dcdcdc"/><rect x="469.40" y="140.84" width="1.6" height="8.46" fill="#ef8c4c"/><rect x="469.70" y="134.84" width="1" height="5" fill="#c4c4c4"/><rect x="466.90" y="146.5" width="1.6" height="2.5" fill="#d0d0d0"/><rect x="467.60" y="151" width="1.2" height="1" fill="#b4b4b4"/><rect x="472.30" y="120" width="4.2" height="29.3" fill="#f2f2f2"/><rect x="472.30" y="120" width="1" height="29.3" fill="#dcdcdc"/><rect x="475.60" y="148.91" width="1.6" height="0.39" fill="#ef8c4c"/><rect x="475.90" y="142.91" width="1" height="5" fill="#c4c4c4"/><rect x="473.10" y="146.5" width="1.6" height="2.5" fill="#d0d0d0"/><rect x="473.80" y="151" width="1.2" height="1" fill="#b4b4b4"/><rect x="478.50" y="120" width="4.2" height="29.3" fill="#f2f2f2"/><rect x="478.50" y="120" width="1" height="29.3" fill="#dcdcdc"/><rect x="481.80" y="127.99" width="1.6" height="21.31" fill="#ef8c4c"/><rect x="482.10" y="121.99" width="1" height="5" fill="#c4c4c4"/><rect x="479.30" y="146.5" width="1.6" height="2.5" fill="#d0d0d0"/><rect x="480.00" y="151" width="1.2" height="1" fill="#b4b4b4"/><rect x="484.70" y="120" width="4.2" height="29.3" fill="#f2f2f2"/><rect x="484.70" y="120" width="1" height="29.3" fill="#dcdcdc"/><rect x="488.00" y="128.97" width="1.6" height="20.33" fill="#ef8c4c"/><rect x="488.30" y="122.97" width="1" height="5" fill="#c4c4c4"/><rect x="485.50" y="146.5" width="1.6" height="2.5" fill="#d0d0d0"/><rect x="486.20" y="151" width="1.2" height="1" fill="#b4b4b4"/><rect x="416" y="149" width="75" height="1" fill="#d0d0d0"/></svg>
<div style="left:456px;top:212px;width:202px;height:63px;background:#fff;box-sizing:border-box;border:1px solid #c8c8c8;box-shadow:1px 1px 3px rgba(0,0,0,0.18)"></div>
<svg style="left:470px;top:214px;" width="40" height="32" viewBox="0 0 40 32"><path d="M8.1 16.1L16.1 8.1L23.7 16L16.1 22.7Z" fill="#fff" stroke="#555" stroke-width="1.1"/>
<path d="M13.6 12V6.5a1.6 1.6 0 0 1 3.2 0V11.5" fill="none" stroke="#555" stroke-width="1.1"/><circle cx="17.3" cy="12.2" r="1.1" fill="#555"/>
<path d="M20.8 10.8C24.5 12 26.5 16 23.5 22.5L22 15.5z" fill="#3f74bd"/>
<path d="M29 15h5l-2.5 3z" fill="#555"/>
<rect x="4" y="23" width="24" height="5.8" fill="#ed7d31"/></svg>
<span class="t" style="left:464.50px;top:248.70px;font-size:13px;line-height:13px;color:#3f3f3f;transform:scaleX(0.8401);">Заливка</span>
<svg style="left:520px;top:214px;" width="40" height="32" viewBox="0 0 40 32"><path d="M19.6 6.6H3.8V21.4H9" fill="none" stroke="#555" stroke-width="1.1"/>
<path d="M10.5 21.2L11 17.8L22.8 6L25 8.2L13.2 20z" fill="#3f74bd"/><path d="M23.6 5.2L24.6 4.2L26.8 6.4L25.8 7.4z" fill="#3f74bd"/>
<path d="M28.2 15h5l-2.5 3z" fill="#555"/>
<rect x="3" y="23" width="24" height="5.8" fill="#4472c4"/></svg>
<span class="t" style="left:516.30px;top:248.70px;font-size:13px;line-height:13px;color:#3f3f3f;transform:scaleX(0.8664);">Контур</span>
<div style="left:558px;top:231px;width:96px;height:24px;background:#fff;box-sizing:border-box;border:1px solid #c6c6c6"></div>
<div style="left:559px;top:232px;width:80.5px;height:22px;overflow:hidden"><div style="position:absolute;left:-559px;top:-232px"><span class="t" style="left:561.40px;top:235.00px;font-size:13px;line-height:13px;color:#262626;transform:scaleX(0.9204);">Область диагр</span></div></div>
<svg style="left:644px;top:240px;" width="6" height="4" viewBox="0 0 6 4"><path d="M0 0h5.5l-2.75 3z" fill="#555"/></svg>
<div style="left:456px;top:290px;width:248px;height:454px;background:#fff;box-sizing:border-box;border:1px solid #c6c6c6;box-shadow:2px 2px 4px rgba(0,0,0,0.16)"></div>
<span class="t" style="left:490.20px;top:297.30px;font-size:13px;line-height:13px;color:#383838;transform:scaleX(0.8781);"><u>В</u>ырезать</span>
<span class="t" style="left:490.20px;top:321.20px;font-size:13px;line-height:13px;color:#383838;transform:scaleX(0.9156);">К<u>о</u>пировать</span>
<div style="left:482px;top:340px;width:220px;height:22px;background:#e9e9e9;"></div>
<span class="t" style="left:491.40px;top:344.00px;font-size:13px;line-height:13px;color:#3f3f3f;font-weight:bold;transform:scaleX(0.8913);">Параметры вставки:</span>
<div style="left:490px;top:392px;width:212px;height:1px;background:#e1e1e1;"></div>
<span class="t" style="left:490.20px;top:398.70px;font-size:13px;line-height:13px;color:#383838;transform:scaleX(0.8961);">Во<u>с</u>становить стиль</span>
<div style="left:490px;top:418px;width:212px;height:1px;background:#e1e1e1;"></div>
<span class="t" style="left:490.20px;top:425.00px;font-size:13px;line-height:13px;color:#383838;transform:scaleX(0.9043);"><u>Ш</u>рифт...</span>
<div style="left:490px;top:444px;width:212px;height:1px;background:#e1e1e1;"></div>
<span class="t" style="left:490.20px;top:451.20px;font-size:13px;line-height:13px;color:#383838;transform:scaleX(0.9164);">Изменить тип диаграммы<u>.</u>..</span>
<span class="t" style="left:490.20px;top:475.40px;font-size:13px;line-height:13px;color:#383838;transform:scaleX(0.9184);">С<u>о</u>хранить как шаблон...</span>
<span class="t" style="left:490.20px;top:499.30px;font-size:13px;line-height:13px;color:#383838;transform:scaleX(0.8803);"><u>В</u>ыбрать данные...</span>
<span class="t" style="left:490.20px;top:522.90px;font-size:13px;line-height:13px;color:#383838;transform:scaleX(0.9098);">Пере<u>м</u>естить диаграмму...</span>
<span class="t" style="left:490.20px;top:546.50px;font-size:13px;line-height:13px;color:#a6a6a6;transform:scaleX(0.9313);">Поворот об<u>ъ</u>емной фигуры...</span>
<div style="left:490px;top:566px;width:212px;height:1px;background:#e1e1e1;"></div>
<span class="t" style="left:491.00px;top:573.30px;font-size:13px;line-height:13px;color:#a6a6a6;transform:scaleX(0.9233);"><u>Г</u>руппировать</span>
<span class="t" style="left:491.00px;top:596.60px;font-size:13px;line-height:13px;color:#a6a6a6;transform:scaleX(0.9012);">На пере<u>д</u>ний план</span>
<span class="t" style="left:491.00px;top:619.90px;font-size:13px;line-height:13px;color:#a6a6a6;transform:scaleX(0.8862);">На задн<u>и</u>й план</span>
<svg style="left:688px;top:576px;" width="6" height="9" viewBox="0 0 6 9"><path d="M0.5 0.5l4 3.8l-4 3.8z" fill="#b0b0b0"/></svg>
<svg style="left:688px;top:600px;" width="6" height="9" viewBox="0 0 6 9"><path d="M0.5 0.5l4 3.8l-4 3.8z" fill="#b0b0b0"/></svg>
<svg style="left:688px;top:623px;" width="6" height="9" viewBox="0 0 6 9"><path d="M0.5 0.5l4 3.8l-4 3.8z" fill="#b0b0b0"/></svg>
<div style="left:679px;top:598px;width:1px;height:16px;background:#dcdcdc;"></div>
<div style="left:679px;top:621px;width:1px;height:16px;background:#dcdcdc;"></div>
<div style="left:490px;top:640px;width:212px;height:1px;background:#e1e1e1;"></div>
<span class="t" style="left:490.20px;top:647.50px;font-size:13px;line-height:13px;color:#383838;transform:scaleX(0.9164);">Н<u>а</u>значить макрос...</span>
<div style="left:490px;top:666px;width:212px;height:1px;background:#e1e1e1;"></div>
<span class="t" style="left:490.20px;top:673.30px;font-size:13px;line-height:13px;color:#383838;transform:scaleX(0.9225);">Изменить замеща<u>ю</u>щий текст...</span>
<span class="t" style="left:490.20px;top:696.80px;font-size:13px;line-height:13px;color:#383838;transform:scaleX(0.9176);"><u>Ф</u>ормат области диаграммы...</span>
<div style="left:490px;top:716px;width:212px;height:1px;background:#e1e1e1;"></div>
<span class="t" style="left:490.20px;top:722.00px;font-size:13px;line-height:13px;color:#a6a6a6;transform:scaleX(0.9170);">Параметры свод<u>н</u>ой диаграммы...</span>
<svg style="left:461px;top:295px;" width="18" height="18" viewBox="0 0 18 18"><path d="M5 1.2C5.5 4 7.5 6.5 9 8.5M13 1.2C12.5 4 10.5 6.5 9 8.5" fill="none" stroke="#666" stroke-width="2"/><path d="M9 8.5L7 10.8M9 8.5L11 10.8" stroke="#666" stroke-width="1.6"/><circle cx="5" cy="12.8" r="2.5" fill="#fff" stroke="#3f74bd" stroke-width="1.3"/><circle cx="13" cy="12.8" r="2.5" fill="#fff" stroke="#3f74bd" stroke-width="1.3"/></svg>
<svg style="left:461px;top:320px;" width="18" height="16" viewBox="0 0 18 16"><path d="M1.6 11.3V1.6H6.8L8 2.8" fill="none" stroke="#666" stroke-width="1.1"/><path d="M1.6 11.3H7.3" stroke="#666" stroke-width="1.1"/><path d="M7.8 4.6H13.5L15.5 6.6V14.1H7.8Z" fill="#fff" stroke="#666" stroke-width="1.1"/><path d="M3 4.3H5.3M3 6.4H6M3 8.5H6M9.5 7.5H11.5M9.5 9.5H14M9.5 11.5H14" stroke="#3f74bd" stroke-width="0.9"/></svg>
<svg style="left:462px;top:342px;" width="17" height="17" viewBox="0 0 17 17"><path d="M1.5 3h3l1-2h3l1 2h3v12h-11z" fill="#d9d6db"/><path d="M8 8h5.5l2.5 2.5v6h-8z" fill="#fff" stroke="#bdbdbd" stroke-width="1"/></svg>
<svg style="left:487px;top:365px;" width="23" height="25" viewBox="0 0 23 25"><path d="M1 4h5l1.5-3h5l1.5 3h5v17h-18z" fill="#d9d6db"/><path d="M10.5 10h7.5l4 4v9.5h-11.5z" fill="#f4f2f4" stroke="#c4c2c4" stroke-width="1"/></svg>
<svg style="left:461px;top:397px;" width="18" height="17" viewBox="0 0 18 17"><path d="M5.4 9.2V15.4H16.3V3.2" fill="none" stroke="#666" stroke-width="1.1"/><rect x="13.1" y="3.2" width="3.6" height="2.4" fill="#666"/><circle cx="8.5" cy="8.4" r="1.3" fill="#666"/><circle cx="8.5" cy="12.3" r="1.1" fill="none" stroke="#666" stroke-width="0.9"/><path d="M11.2 8.4H14.8M11.2 12.3H14.8" stroke="#666" stroke-width="1.1"/><path d="M11.4 4.6C10 1.2 5.5 0.8 2.4 6.6" fill="none" stroke="#3f74bd" stroke-width="1.6"/><path d="M1.6 2.2V7.2H6.6" fill="none" stroke="#3f74bd" stroke-width="1.6"/></svg>
<span class="t" style="left:465px;top:424.5px;font-size:12.5px;line-height:13px;font-weight:bold;color:#444">A</span>
<div style="left:463px;top:456px;width:4px;height:9px;background:#4a7dbd;"></div>
<div style="left:468px;top:451px;width:4px;height:14px;background:#ecc47c;"></div>
<div style="left:473px;top:454px;width:4px;height:11px;background:#777;"></div>
<div style="left:463px;top:477px;width:4px;height:11px;background:#4a7dbd;"></div>
<div style="left:468px;top:474px;width:4px;height:4px;background:#ecc47c;"></div>
<div style="left:473px;top:476px;width:4px;height:2.5px;background:#777;"></div>
<svg style="left:467px;top:478px;" width="12" height="12" viewBox="0 0 12 12"><rect x="0.5" y="0.5" width="10.5" height="11" fill="#7e4ea6"/><rect x="3" y="6.5" width="5.5" height="4" fill="#fff"/><rect x="3" y="0.5" width="5" height="3" fill="#fff"/></svg>
<svg style="left:461px;top:497px;" width="18" height="17" viewBox="0 0 18 17"><rect x="1.7" y="1.5" width="12.6" height="11" fill="#fff" stroke="#707070" stroke-width="1.1"/><rect x="1.2" y="1" width="13.6" height="2.6" fill="#707070"/><path d="M5.7 3.6V12.5M10 3.6V12.5M1.7 6.6H14.3M1.7 9.6H14.3" stroke="#d0d0d0" stroke-width="0.9"/><path d="M10.5 6.3H6.3V9.9" fill="none" stroke="#ed7d31" stroke-width="1.2"/><rect x="8.5" y="8.3" width="8.5" height="8.4" fill="#fff" stroke="#707070" stroke-width="1.1"/><path d="M11.2 16.5V12.5H12.8V16.5M13.6 16.5V10.8H15.2V16.5" fill="none" stroke="#707070" stroke-width="0.9"/></svg>
<svg style="left:461px;top:522px;" width="18" height="16" viewBox="0 0 18 16"><path d="M1.2 1.4H16.8V12.7H11.5L10.5 14.4H6.5L7.2 12.7H5.5V14.4H1.2Z" fill="#fff" stroke="#666" stroke-width="1.1"/><path d="M4.3 10.7V5.9H6.8V10.7M6.8 10.7V3.4H9.8V10.7M9.8 10.7V7.3H12.8V10.7" fill="#e6e6e6" stroke="#666" stroke-width="1"/><path d="M3.8 10.7H13.3" stroke="#666" stroke-width="1"/></svg>
<svg style="left:462px;top:548px;" width="15" height="13" viewBox="0 0 15 13"><path d="M1.5 3.5l2.5-2.5h9.5v8l-2.5 2.5h-9.5z" fill="#e8e8e8" stroke="#bbb" stroke-width="1"/><path d="M11 11v-7.5h-9.5M11 3.5l2.5-2.5" fill="none" stroke="#bbb" stroke-width="1"/></svg>
<svg style="left:461px;top:571px;" width="18" height="17" viewBox="0 0 18 17"><g fill="#bdbdbd"><rect x="1" y="1" width="3" height="3"/><rect x="14" y="1" width="3" height="3"/><rect x="1" y="14" width="3" height="3"/><rect x="14" y="14" width="3" height="3"/></g><path d="M2.5 5v8M15.5 5v8M5 2.5h8M5 15.5h8" stroke="#bdbdbd" stroke-width="1" stroke-dasharray="2 1"/><rect x="5" y="5" width="6" height="6" fill="none" stroke="#bdbdbd"/><rect x="7.5" y="7.5" width="5.5" height="5.5" fill="#e0dce3" stroke="#bdbdbd"/></svg>
<svg style="left:461px;top:595px;" width="18" height="17" viewBox="0 0 18 17"><path d="M1.5 5v-3.5h3.5M16 12v3.5h-3.5" fill="none" stroke="#bdbdbd" stroke-width="1.2"/><rect x="4" y="4" width="9" height="9" fill="#d9d6db"/></svg>
<svg style="left:461px;top:619px;" width="18" height="17" viewBox="0 0 18 17"><rect x="1.5" y="1.5" width="5" height="5" fill="#fff" stroke="#bdbdbd"/><rect x="4.5" y="4.5" width="8" height="8" fill="#d9d6db"/><rect x="10.5" y="10.5" width="5" height="5" fill="#fff" stroke="#bdbdbd"/></svg>
<svg style="left:461px;top:671px;" width="18" height="18" viewBox="0 0 18 18"><rect x="1.5" y="1.5" width="13.5" height="13" fill="#fff" stroke="#555" stroke-width="1.1"/><circle cx="10.2" cy="4.3" r="1.5" fill="#e8a94f"/><path d="M2.5 12l3.5-4.5l2.5 3l2-2l3 3.5z" fill="#3a70c0"/><rect x="7" y="11" width="9.8" height="5.5" fill="#fff" stroke="#555" stroke-width="1.1"/><path d="M9 13.8h6" stroke="#555" stroke-width="1"/></svg>
<svg style="left:461px;top:696px;" width="18" height="17" viewBox="0 0 18 17"><rect x="2.2" y="6.2" width="3.5" height="7.5" fill="#b3b3b3"/><rect x="7.2" y="1.2" width="3.7" height="9.3" fill="#8e8e8e"/><rect x="12.2" y="4.3" width="2.8" height="2" fill="#c4c4c4"/><rect x="12.5" y="11.5" width="3" height="2.2" fill="#c4c4c4"/><path d="M16.6 3.1V8.4L14.1 10.7L12.2 8.7Z" fill="#707070"/><path d="M5.1 15.6C6.8 12.6 9 10.6 11.2 10.6A2.5 2.5 0 0 1 12.3 13.6C10.5 15.1 8 15.6 5.1 15.6Z" fill="#3f74bd" stroke="#fff" stroke-width="0.6"/></svg>
<svg style="left:461px;top:721px;" width="18" height="18" viewBox="0 0 18 18"><rect x="1.6" y="1.6" width="12.4" height="12.6" fill="#fff" stroke="#a6a6a6" stroke-width="1.2"/><rect x="3" y="3" width="3" height="2.6" fill="#d6d6d6"/><rect x="7" y="3" width="5.8" height="2.6" fill="#d6d6d6"/><rect x="3" y="6.6" width="3" height="6.4" fill="#d6d6d6"/><rect x="8.2" y="7.6" width="9" height="9.2" fill="#fff" stroke="#a6a6a6" stroke-width="1.2"/><rect x="8.2" y="7.4" width="9" height="1.8" fill="#a6a6a6"/><rect x="10" y="11" width="1.8" height="1.6" fill="#a6a6a6"/><rect x="10" y="13.8" width="1.8" height="1.6" fill="#a6a6a6"/><path d="M13 11.8H15.8M13 14.6H15.8" stroke="#a6a6a6" stroke-width="1"/></svg>
<svg style="left:450px;top:511px;" width="228" height="42" viewBox="0 0 228 42"><defs><filter id="bl" x="-10%" y="-30%" width="120%" height="160%"><feGaussianBlur stdDeviation="1.6"/></filter></defs><rect x="5.5" y="6.4" width="215" height="30.6" rx="9" ry="9" fill="none" stroke="rgba(0,0,0,0.45)" stroke-width="4" filter="url(#bl)" transform="translate(0.5,1.5)"/><rect x="7.8" y="8.3" width="210.5" height="24.5" rx="7" ry="7" fill="none" stroke="rgba(0,0,0,0.10)" stroke-width="2.5" filter="url(#bl)"/><rect x="5.5" y="4.4" width="215" height="30.6" rx="9" ry="9" fill="none" stroke="#e8000e" stroke-width="3.8"/></svg>
<div style="left:0px;top:782px;width:892px;height:32px;background:#000;"></div>
</body></html>
